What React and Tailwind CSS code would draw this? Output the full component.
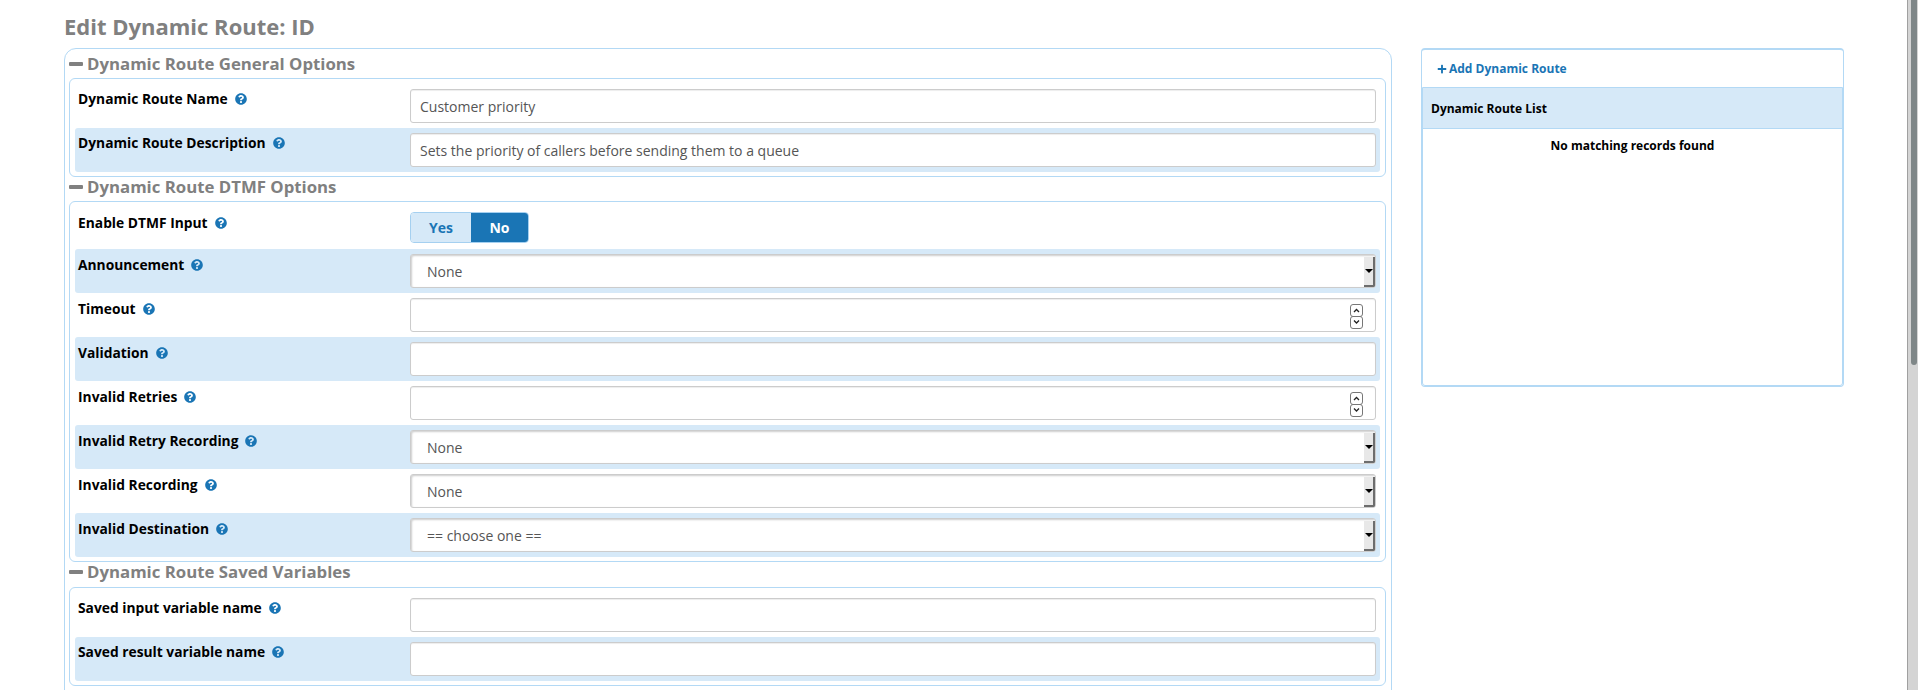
import React from 'react';
import { FaPlus, FaQuestionCircle } from 'react-icons/fa';

const Help = () => <FaQuestionCircle className="ml-[7px] inline-block w-3 h-3 text-[#1a75b5] align-[-1px]" />;

const Row = ({ label, blue, tall = true, children }) => (
  <div className={`flex rounded-[3px] pl-[3px] pr-1 py-[5px] ${blue ? 'bg-[#d6e9f8]' : ''} ${tall ? 'h-11' : 'h-[42px]'}`}>
    <label className="w-[332px] shrink-0 text-[13.8px] leading-5 font-bold text-black">
      {label}
      <Help />
    </label>
    <div className="flex-1 relative">{children}</div>
  </div>
);

const TextInput = ({ value = '' }) => (
  <input
    type="text"
    readOnly
    value={value}
    className="w-full h-[34px] px-[9px] border border-[#cccccc] rounded-[3px] bg-white text-sm text-[#555555] outline-none shadow-[inset_0_1px_1px_rgba(0,0,0,0.075)]"
  />
);

const NumberInput = () => (
  <>
    <TextInput />
    <div className="absolute right-[12px] top-[6px] flex flex-col">
      {/* little spinner buttons */}
      <svg width="14" height="25" viewBox="0 0 14 25" fill="none">
        <rect x="0.5" y="0.5" width="12" height="12" rx="2.5" fill="#fff" stroke="#777" />
        <rect x="0.5" y="12.5" width="12" height="12" rx="2.5" fill="#fff" stroke="#777" />
        <path d="M4 8l2.5-2.5L9 8" stroke="#222" strokeWidth="1.3" />
        <path d="M4 16.5L6.5 19 9 16.5" stroke="#222" strokeWidth="1.3" />
      </svg>
    </div>
  </>
);

const SelectInput = ({ value }) => (
  <>
    <select className="appearance-none w-full h-[34px] pl-[16px] pt-px border border-[#cccccc] rounded-[3px] bg-white text-sm text-[#555555] outline-none shadow-[inset_1px_1px_2px_rgba(0,0,0,0.2)]">
      <option>{value}</option>
    </select>
    <div className="absolute right-[1px] top-[3px] w-[11px] h-[30px] bg-[#e8e8e8] border-r-2 border-b-2 border-[#6d6d6d] rounded-br-[2px] flex items-center justify-center pointer-events-none">
      <span className="w-0 h-0 border-x-4 border-x-transparent border-t-4 border-t-black" />
    </div>
  </>
);

const YesNo = () => (
  <div className="flex w-[119px] h-[31px] text-sm font-bold rounded-[4px] overflow-hidden border border-[#a5d0f0]">
    <span className="w-[60px] flex items-center justify-center bg-[#d6e9f8] text-[#1a75b5]">Yes</span>
    <span className="flex-1 flex items-center justify-center bg-[#1a75b5] text-white">No</span>
  </div>
);

const Legend = ({ className = 'h-6', children }) => (
  <div className={`flex items-start pl-1 text-[16.8px] leading-5 font-bold text-[#808080] ${className}`}>
    <span className="w-[14px] h-1 mt-[8px] mr-1 rounded-[1px] bg-[#808080]" />
    {children}
  </div>
);

const Section = ({ title, legendClass, boxClass = '', children }) => (
  <>
    <Legend className={legendClass}>{title}</Legend>
    <div className={`ml-1 mr-[5px] border border-[#b3d9f5] rounded-[6px] px-[5px] pt-[5px] pb-1 ${boxClass}`}>{children}</div>
  </>
);

export default function App() {
  return (
    <div className="flex h-[690px] overflow-hidden bg-white font-['Open_Sans',sans-serif]">
      <div className="flex-1 min-w-0 pl-16">
        <h2 className="h-12 pt-[11px] text-[22px] leading-[30px] font-bold text-[#808080]">Edit Dynamic Route: ID</h2>
        <div className="flex items-start gap-[29px]">
          <form className="w-[1328px] shrink-0 border border-[#b3d9f5] rounded-t-[12px] pt-[5px]">
            <Section title="Dynamic Route General Options">
              <Row label="Dynamic Route Name"><TextInput value="Customer priority" /></Row>
              <Row label="Dynamic Route Description" blue><TextInput value="Sets the priority of callers before sending them to a queue" /></Row>
            </Section>
            <Section title="Dynamic Route DTMF Options" boxClass="[&_label]:pt-px">
              <Row label="Enable DTMF Input" tall={false}><YesNo /></Row>
              <Row label="Announcement" blue><SelectInput value="None" /></Row>
              <Row label="Timeout"><NumberInput /></Row>
              <Row label="Validation" blue><TextInput /></Row>
              <Row label="Invalid Retries"><NumberInput /></Row>
              <Row label="Invalid Retry Recording" blue><SelectInput value="None" /></Row>
              <Row label="Invalid Recording"><SelectInput value="None" /></Row>
              <Row label="Invalid Destination" blue><SelectInput value="== choose one ==" /></Row>
            </Section>
            <Section title="Dynamic Route Saved Variables" legendClass="h-[25px]">
              <Row label="Saved input variable name"><TextInput /></Row>
              <Row label="Saved result variable name" blue><TextInput /></Row>
            </Section>
            <Legend>Dynamic Route Entries</Legend>
          </form>
          <aside className="w-[423px] shrink-0 h-[339px] border border-t-2 border-[#b3d9f5] rounded-[4px] text-xs font-bold">
            <div className="h-[37px] flex items-center pl-[15px] text-[#1a75b5]">
              <FaPlus className="w-[10px] h-[10px] mr-[2px]" />
              Add Dynamic Route
            </div>
            <div className="h-[299px] border border-[#b3d9f5] rounded-b-[3px]">
              <div className="h-[41px] pt-px flex items-center pl-[8px] bg-[#d6e9f8] border-b border-[#b3d9f5] text-black">Dynamic Route List</div>
              <p className="pt-[9px] text-center text-black">No matching records found</p>
            </div>
          </aside>
        </div>
      </div>
      {/* page scrollbar */}
      <div className="w-[11px] shrink-0 h-full bg-[#d4d4d4] border-l border-[#a0a0a0] pl-[3px] pr-px">
        <div className="h-[365px] bg-[#7f8788] rounded-b-[3px]" />
      </div>
    </div>
  );
}
